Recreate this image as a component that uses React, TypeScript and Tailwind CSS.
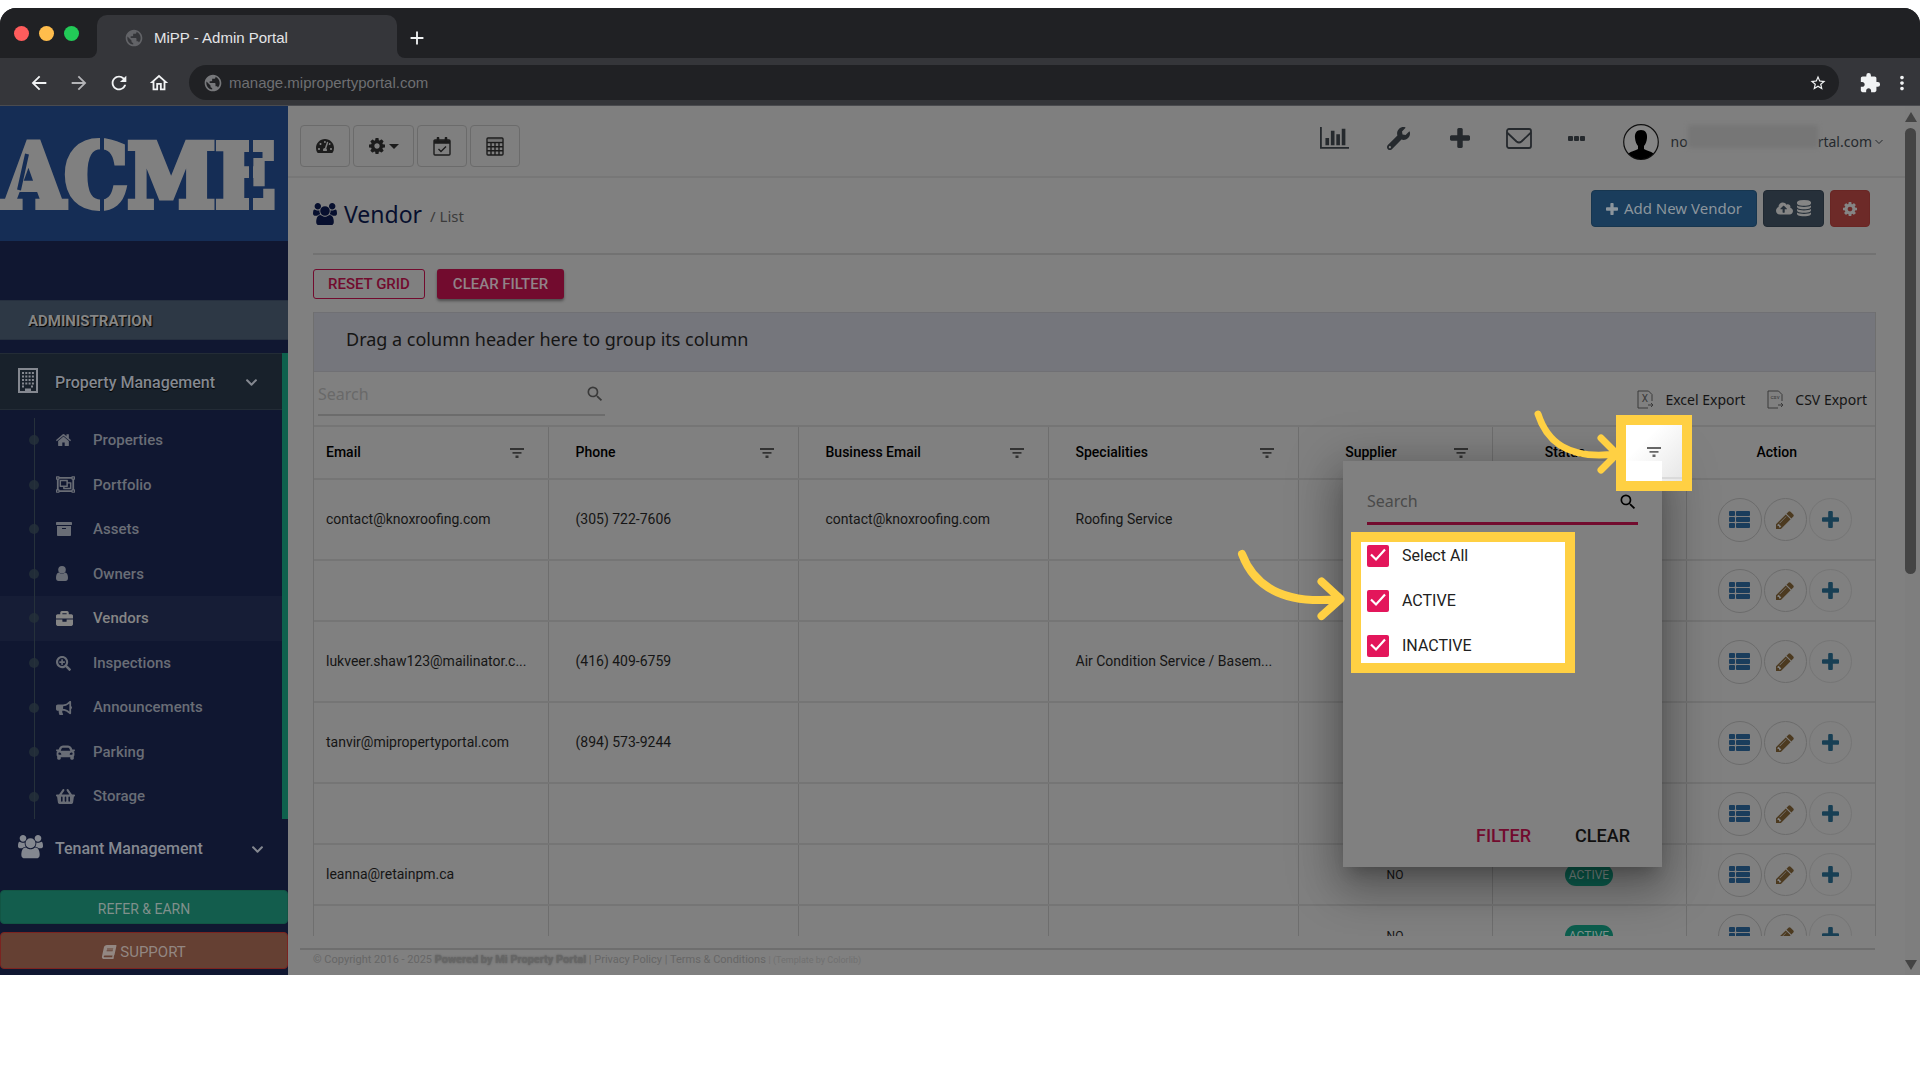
import React from "react";
import {
  FaArchive,
  FaBook,
  FaBriefcase,
  FaBullhorn,
  FaCar,
  FaChevronDown,
  FaCloudUploadAlt,
  FaRegObjectGroup,
  FaSearchPlus,
  FaShoppingBasket,
  FaTachometerAlt,
  FaWrench,
} from "react-icons/fa";
import {
  MdAdd,
  MdArrowBack,
  MdArrowForward,
  MdExtension,
  MdMoreVert,
  MdOutlineHome,
  MdPublic,
  MdRefresh,
  MdSearch,
  MdStarBorder,
} from "react-icons/md";

type IconProps = { className?: string };

const PlusIcon = ({ className }: IconProps) => (
  <svg viewBox="192 128 1408 1408" fill="currentColor" className={className}>
    <path d="M1600 736v192q0 40-28 68t-68 28h-416v416q0 40-28 68t-68 28h-192q-40 0-68-28t-28-68v-416h-416q-40 0-68-28t-28-68v-192q0-40 28-68t68-28h416v-416q0-40 28-68t68-28h192q40 0 68 28t28 68v416h416q40 0 68 28t28 68z" />
  </svg>
);

const CogIcon = ({ className }: IconProps) => (
  <svg viewBox="128 128 1536 1536" fill="currentColor" className={className}>
    <path d="M1152 896q0-106-75-181t-181-75-181 75-75 181 75 181 181 75 181-75 75-181zm512-109v222q0 12-8 23t-20 13l-185 28q-19 54-39 91 35 50 107 138 10 12 10 25t-9 23q-27 37-99 108t-94 71q-12 0-26-9l-138-108q-44 23-91 38-16 136-29 186-7 28-36 28h-222q-14 0-24.5-8.5t-11.5-21.5l-28-184q-49-16-90-37l-141 107q-10 9-25 9-14 0-25-11-126-114-165-168-7-10-7-23 0-12 8-23 15-21 51-66.5t54-70.5q-27-50-41-99l-183-27q-13-2-21-12.5t-8-23.5v-222q0-12 8-23t19-13l186-28q14-46 39-92-40-57-107-138-10-12-10-24 0-10 9-23 26-36 98.5-107.5t94.5-71.5q13 0 26 10l138 107q44-23 91-38 16-136 29-186 7-28 36-28h222q14 0 24.5 8.5t11.5 21.5l28 184q49 16 90 37l142-107q9-9 24-9 13 0 25 10 129 119 165 170 7 8 7 22 0 12-8 23-15 21-51 66.5t-54 70.5q26 50 41 98l183 28q13 2 21 12.5t8 23.5z" />
  </svg>
);

const UsersIcon = ({ className }: IconProps) => (
  <svg viewBox="0 0 1920 1792" fill="currentColor" className={className}>
    <path d="M593 896q-162 5-265 128h-134q-82 0-138-40.5t-56-118.5q0-353 124-353 6 0 43.5 21t97.5 42.5 119 21.5q67 0 133-23-5 37-5 66 0 139 81 256zm1071 637q0 120-73 189.5t-194 69.5h-874q-121 0-194-69.5t-73-189.5q0-53 3.5-103.5t14-109 26.5-108.5 43-97.5 62-81 85.5-53.5 111.5-20q10 0 43 21.5t73 48 107 48 135 21.5 135-21.5 107-48 73-48 43-21.5q61 0 111.5 20t85.5 53.5 62 81 43 97.5 26.5 108.5 14 109 3.5 103.5zm-1024-1277q0 106-75 181t-181 75-181-75-75-181 75-181 181-75 181 75 75 181zm704 384q0 159-112.5 271.5t-271.5 112.5-271.5-112.5-112.5-271.5 112.5-271.5 271.5-112.5 271.5 112.5 112.5 271.5zm576 225q0 78-56 118.5t-138 40.5h-134q-103-123-265-128 81-117 81-256 0-29-5-66 66 23 133 23 59 0 119-21.5t97.5-42.5 43.5-21q124 0 124 353zm-128-609q0 106-75 181t-181 75-181-75-75-181 75-181 181-75 181 75 75 181z" />
  </svg>
);

const UserIcon = ({ className }: IconProps) => (
  <svg viewBox="0 0 12 15" fill="currentColor" className={className}>
    <circle cx="6" cy="3.800" r="3.800" />
    <path d="M3 6.500C.8 6.800 0 9 0 12c0 2 1 3 2.500 3h7c1.500 0 2.500-1 2.500-3 0-3-.8-5.200-3-5.500-1.700 1.700-4.300 1.700-6 0z" />
  </svg>
);

const HomeIcon = ({ className }: IconProps) => (
  <svg viewBox="90 240 1612 1300" fill="currentColor" className={className}>
    <path d="M1472 992v480q0 26-19 45t-45 19h-384v-384h-256v384h-384q-26 0-45-19t-19-45v-480q0-1 .5-3t.5-3l575-474 575 474q1 2 1 6zm223-69l-62 74q-8 9-21 11h-3q-13 0-21-7l-692-577-692 577q-12 8-24 7-13-2-21-11l-62-74q-8-10-7-23.5t11-21.5l719-599q32-26 76-26t76 26l244 204v-195q0-14 9-23t23-9h192q14 0 23 9t9 23v408l219 182q10 8 11 21.5t-7 23.5z" />
  </svg>
);

const DatabaseIcon = ({ className }: IconProps) => (
  <svg viewBox="128 0 1536 1792" fill="currentColor" className={className}>
    <path d="M896 768q237 0 443-43t325-127v170q0 69-103 128t-280 93.5-385 34.5-385-34.5-280-93.5-103-128v-170q119 84 325 127t443 43zm0 768q237 0 443-43t325-127v170q0 69-103 128t-280 93.5-385 34.5-385-34.5-280-93.5-103-128v-170q119 84 325 127t443 43zm0-384q237 0 443-43t325-127v170q0 69-103 128t-280 93.5-385 34.5-385-34.5-280-93.5-103-128v-170q119 84 325 127t443 43zm0-1152q208 0 385 34.5t280 93.5 103 128v128q0 69-103 128t-280 93.5-385 34.5-385-34.5-280-93.5-103-128v-128q0-69 103-128t280-93.5 385-34.5z" />
  </svg>
);

const PencilIcon = ({ className }: IconProps) => (
  <svg viewBox="128 128 1536 1536" fill="currentColor" className={className}>
    <path d="M491 1536l91-91-235-235-91 91v107h128v128h107zm523-928q0-22-22-22-10 0-17 7l-542 542q-7 7-7 17 0 22 22 22 10 0 17-7l542-542q7-7 7-17zm-54-192l416 416-832 832h-416v-416zm683 96q0 53-37 90l-166 166-416-416 166-165q36-38 90-38 53 0 91 38l235 234q37 39 37 91z" />
  </svg>
);

const ChartIcon = ({ className }: IconProps) => (
  <svg viewBox="0 128 2048 1536" fill="currentColor" className={className}>
    <path d="M640 896v512h-256v-512h256zm384-512v1024h-256v-1024h256zm1024 1152v128h-2048v-1536h128v1408h1920zm-640-896v768h-256v-768h256zm384-384v1152h-256v-1152h256z" />
  </svg>
);

const ListIcon = ({ className }: IconProps) => (
  <svg viewBox="0 0 21 17" fill="currentColor" className={className}>
    {[0, 6, 12].map((y) => (
      <React.Fragment key={y}>
        <rect x="0" y={y} width="6" height="5" rx="1" />
        <rect x="7" y={y} width="14" height="5" rx="1" />
      </React.Fragment>
    ))}
  </svg>
);

const BuildingIcon = ({ className }: IconProps) => (
  <svg viewBox="0 0 20 25" fill="none" stroke="currentColor" className={className}>
    <rect x="1" y="1" width="18" height="23" strokeWidth="2" />
    <path d="M4 5h12M4 8.5h12M4 12h12M4 15.5h12M4 18.5h3M13 18.5h3" strokeWidth="2.2" strokeDasharray="2 1.3" />
    <path d="M7 20.5h6v4H7z" fill="currentColor" stroke="none" />
  </svg>
);

const CalendarIcon = ({ className }: IconProps) => (
  <svg viewBox="0 0 18 19" fill="none" stroke="currentColor" className={className}>
    <rect x="1" y="3" width="16" height="15" rx="1" strokeWidth="1.4" />
    <path d="M1 5h16" strokeWidth="3.500" />
    <path d="M5 1v4M13 1v4" strokeWidth="2.600" strokeLinecap="round" />
    <path d="M5.500 12l2.500 2.500 5-5" strokeWidth="1.400" />
  </svg>
);

const CalculatorIcon = ({ className }: IconProps) => (
  <svg viewBox="0 0 18 19" fill="none" stroke="currentColor" className={className}>
    <rect x="1" y="1" width="16" height="17" rx="1" strokeWidth="1.4" />
    <path d="M1 5.5h16M1 9.7h16M1 13.8h16M5 5.5V18M9 5.5V18M13 5.5V18" strokeWidth="1.4" />
    <path d="M2 2.8h14" strokeWidth="1" opacity=".3" />
  </svg>
);

const EnvelopeIcon = ({ className }: IconProps) => (
  <svg viewBox="0 0 26 21" fill="none" stroke="currentColor" strokeWidth="1.8" className={className}>
    <rect x="1" y="1" width="24" height="19" rx="2" />
    <path d="M1 4.5l9.5 9q2.5 2 5 0L25 4.5" />
  </svg>
);

const FilterIcon = ({ className }: IconProps) => (
  <svg viewBox="0 0 14 10" fill="currentColor" className={className}>
    <path d="M0 0h14v2H0zM2.500 4h9v1.800h-9zM5.500 7.500h3V10h-3z" />
  </svg>
);

const ExportIcon = ({ label, className }: IconProps & { label: string }) => (
  <svg viewBox="0 0 17 19" fill="none" stroke="currentColor" className={className}>
    <path d="M15 11V4.500L11.500 1H1v17h10M11 15h5M14 13l2 2-2 2" />
    <text
      x="8"
      y={label === "X" ? 12 : 9}
      fontSize={label === "X" ? 10 : 6}
      textAnchor="middle"
      fill="currentColor"
      stroke="none"
      fontFamily="Roboto, sans-serif"
    >
      {label}
    </text>
  </svg>
);

const AvatarIcon = ({ className }: IconProps) => (
  <svg viewBox="0 0 36 36" className={className}>
    <circle cx="18" cy="18" r="17.300" fill="#858585" stroke="#111" strokeWidth="1.200" />
    <path
      d="M18 6c-4.500 0-6.500 3.500-6 8 .3 3.500 1.500 6.500 3 8v3c-2 1.800-7 2-9.500 4.500A17 17 0 0 0 18 35.200a17 17 0 0 0 12.500-5.700C28 27 23 26.800 21 25v-3c1.500-1.500 2.700-4.500 3-8 .5-4.500-1.500-8-6-8z"
      fill="#000"
    />
  </svg>
);

const menu = [
  { label: "Properties", icon: <HomeIcon className="w-[15px]" /> },
  { label: "Portfolio", icon: <FaRegObjectGroup size={19} /> },
  { label: "Assets", icon: <FaArchive size={16} /> },
  { label: "Owners", icon: <UserIcon className="w-3" /> },
  { label: "Vendors", icon: <FaBriefcase size={17} />, active: true },
  { label: "Inspections", icon: <FaSearchPlus size={15} /> },
  { label: "Announcements", icon: <FaBullhorn size={16} /> },
  { label: "Parking", icon: <FaCar size={19} /> },
  { label: "Storage", icon: <FaShoppingBasket size={19} /> },
];

type Vendor = {
  email?: string;
  phone?: string;
  business?: string;
  speciality?: string;
  tall?: boolean;
};

const vendors: Vendor[] = [
  {
    email: "contact@knoxroofing.com",
    phone: "(305) 722-7606",
    business: "contact@knoxroofing.com",
    speciality: "Roofing Service",
    tall: true,
  },
  {},
  {
    email: "lukveer.shaw123@mailinator.c...",
    phone: "(416) 409-6759",
    speciality: "Air Condition Service / Basem...",
    tall: true,
  },
  { email: "tanvir@mipropertyportal.com", phone: "(894) 573-9244", tall: true },
  {},
  { email: "leanna@retainpm.ca" },
  {},
];

const BrowserBar = () => (
  <header className="bg-[#35363a] [font-family:'Liberation_Sans',Arial,sans-serif]">
    <div className="flex h-[50px]">
      <div className="flex w-[97px] items-center gap-[10px] rounded-br-[8px] bg-[#202124] pl-[14px]">
        <span className="size-[15px] rounded-full bg-[#ff5c5c]" />
        <span className="size-[15px] rounded-full bg-[#ffbd4c]" />
        <span className="size-[15px] rounded-full bg-[#22ca57]" />
      </div>
      <div className="flex w-[300px] items-end bg-[linear-gradient(#202124_50%,#35363a_50%)]">
        <div className="flex h-[43px] w-full items-center gap-[10px] rounded-t-[10px] bg-[#35363a] pt-[3px] pl-[27px] text-[15px] text-[#e4e5e7]">
          <MdPublic size={20} className="text-[#626367]" />
          MiPP - Admin Portal
        </div>
      </div>
      <div className="flex flex-1 items-end rounded-bl-[8px] bg-[#202124]">
        <button aria-label="New tab" className="flex h-[43px] w-10 items-center justify-center pt-[3px] text-[#f1f3f4]">
          <MdAdd size={22} />
        </button>
      </div>
    </div>
    <div className="flex h-12 items-center border-b border-[#4a4b4f] bg-[#35363a] pt-[2px] text-[#f1f3f4]">
      <div className="flex w-[189px] items-center gap-[18px] pl-7">
        <MdArrowBack size={22} />
        <MdArrowForward size={22} className="text-[#b4b5b8]" />
        <MdRefresh size={22} />
        <MdOutlineHome size={22} />
      </div>
      <div className="flex h-[35px] flex-1 items-center rounded-full bg-[#202124] pr-3 pl-[14px]">
        <MdPublic size={20} className="text-[#77787b]" />
        <input
          aria-label="Address"
          defaultValue="manage.mipropertyportal.com"
          className="ml-[6px] flex-1 bg-transparent pt-[2px] text-[15px] text-[#6e6f72] outline-none"
        />
        <MdStarBorder size={18} />
      </div>
      <div className="flex w-[81px] items-center gap-[10px] pl-5">
        <MdExtension size={22} />
        <MdMoreVert size={22} />
      </div>
    </div>
  </header>
);

const Sidebar = () => (
  <aside className="flex w-[288px] shrink-0 flex-col bg-[#101731] [font-family:Roboto,sans-serif] font-medium text-[#848890]">
    <a
      href="#"
      className="relative flex h-[135px] items-center bg-[#152d55] pt-1 pl-[3px] [font-family:'DejaVu_Serif_Condensed','DejaVu_Serif',serif] text-[88px] leading-none font-bold text-[#808080] [-webkit-text-stroke:6px_#808080]"
    >
      ACME
      {/* stencil breaks in the logo lettering */}
      <svg viewBox="0 0 288 135" fill="none" stroke="#152d55" strokeWidth="4" className="absolute inset-0 size-full">
        <path d="M27 48L19 84M102 26v84M251 28v82" />
      </svg>
    </a>
    <div className="mt-[59px] flex h-10 items-center border-y border-[#26303f] bg-[#2d3845] pt-[2px] pl-7 text-[15px] font-bold text-[#858585] [text-shadow:1px_1px_1px_#000]">
      ADMINISTRATION
    </div>
    <nav className="mt-[13px]">
      <div className="border-r-[6px] border-[#0e614d]">
        <button className="flex h-[57px] w-full items-center border-y border-[#232c36] bg-[#18212b] pt-[2px] pl-[18px] text-[16px] [text-shadow:0_1px_1px_#000]">
          <BuildingIcon className="mb-1 h-[25px] w-5" />
          <span className="ml-[17px] flex-1 text-left">Property Management</span>
          <FaChevronDown size={13} className="mr-6" />
        </button>
        <ul className="relative mt-2 grid h-[401px] grid-rows-9 before:absolute before:inset-y-0 before:left-[34px] before:w-px before:bg-[#26313b]">
          {menu.map(({ label, icon, active }) => (
            <li key={label}>
              <a
                href="#"
                className={
                  active
                    ? "flex h-full items-center bg-[#161d36] pl-[29px] text-[15px] text-[#858585]"
                    : "flex h-full items-center pl-[29px] text-[15px] text-[#696d76]"
                }
              >
                <span className="size-[10px] rounded-full bg-[#212c38]" />
                <span className="ml-[17px] w-[37px]">{icon}</span>
                {label}
              </a>
            </li>
          ))}
        </ul>
      </div>
      <button className="flex h-[58px] w-full items-center pt-[2px] pl-[18px] text-[16px]">
        <UsersIcon className="mb-1 w-[25px]" />
        <span className="ml-3 flex-1 text-left">Tenant Management</span>
        <FaChevronDown size={13} className="mr-6" />
      </button>
    </nav>
    <button className="mt-[13px] h-[34px] rounded-[4px] border border-[#125544] bg-[#135d4d] pt-1 text-[14px] font-normal text-[#80908c]">
      REFER &amp; EARN
    </button>
    <button className="mt-2 flex h-[37px] items-center justify-center gap-1 rounded-[4px] border border-[#7b2320] bg-[#654033] pt-[3px] text-[15px] font-normal text-[#938782]">
      <FaBook size={14} className="-skew-x-12" />
      SUPPORT
    </button>
  </aside>
);

const toolButton =
  "flex h-[42px] items-center justify-center rounded-[4px] border border-[#6b6b6b] text-[#1c1c1c]";

const TopNav = () => (
  <div className="flex h-[72px] justify-between border-b-2 border-[#777] bg-[#7f7f7f] pr-[22px] pl-3 text-[#25292d]">
    <div className="mt-[19px] flex gap-[3px]">
      <button aria-label="Dashboard" className={`${toolButton} w-[50px]`}>
        <FaTachometerAlt size={18} />
      </button>
      <button aria-label="Settings" className={`${toolButton} w-[61px] gap-1`}>
        <CogIcon className="size-4" />
        <span className="border-x-[5px] border-t-[5px] border-x-transparent border-t-current" />
      </button>
      <button aria-label="Calendar" className={`${toolButton} w-[50px]`}>
        <CalendarIcon className="h-[19px] w-[18px]" />
      </button>
      <button aria-label="Calculator" className={`${toolButton} w-[50px]`}>
        <CalculatorIcon className="h-[19px] w-[18px]" />
      </button>
    </div>
    <div className="flex h-16 items-center">
      <ChartIcon className="mr-[38px] w-[29px]" />
      <FaWrench size={23} className="mr-10" />
      <PlusIcon className="mr-9 w-5" />
      <EnvelopeIcon className="mr-9 w-[26px]" />
      <span className="mr-[38px] flex gap-px">
        <i className="size-[5px] rounded-[1px] bg-current" />
        <i className="size-[5px] rounded-[1px] bg-current" />
        <i className="size-[5px] rounded-[1px] bg-current" />
      </span>
      <button className="mt-[7px] flex items-center text-[14px]">
        <AvatarIcon className="mr-3 size-9" />
        no
        <span className="mb-[10px] h-[23px] w-[130px] bg-[#767676] blur-[2px]" />
        rtal.com
        <svg viewBox="0 0 8 6" fill="none" stroke="currentColor" className="ml-[3px] w-2">
          <path d="M.5 1L4 4.500 7.500 1" />
        </svg>
      </button>
    </div>
  </div>
);

const columns = ["Email", "Phone", "Business Email", "Specialities"];

const VendorTable = () => (
  <div className="h-[511px] overflow-hidden">
    <table className="w-full table-fixed border-collapse text-[14px] text-[#151515]">
      <colgroup>
        <col />
        <col className="w-[250px]" />
        <col className="w-[250px]" />
        <col className="w-[250px]" />
        <col className="w-[194px]" />
        <col className="w-[194px]" />
        <col className="w-[189px]" />
      </colgroup>
      <thead>
        <tr className="h-[53px] border-y-2 border-[#757575] text-black">
          {columns.map((name) => (
            <th key={name} className="border-r border-[#6e6e6e] pr-6 pl-[27px] text-left font-medium first:pl-3">
              <div className="flex items-center justify-between">
                {name}
                <FilterIcon className="w-[14px] text-[#333]" />
              </div>
            </th>
          ))}
          <th className="border-r border-[#6e6e6e] pr-6 font-medium">
            <div className="flex items-center">
              <span className="flex-1 pr-[10px]">Supplier</span>
              <FilterIcon className="w-[14px] text-[#333]" />
            </div>
          </th>
          <th className="border-r border-[#6e6e6e] pr-12 font-medium">Status</th>
          <th className="pr-2 font-medium">Action</th>
        </tr>
      </thead>
      <tbody>
        {vendors.map(({ email, phone, business, speciality, tall }, index) => (
          <tr key={index} className={tall ? "h-[81px] border-b-2 border-[#757575]" : "h-[61px] border-b-2 border-[#757575]"}>
            <td className="border-r border-[#6e6e6e] pl-3 whitespace-nowrap">{email}</td>
            <td className="border-r border-[#6e6e6e] pl-[27px]">{phone}</td>
            <td className="border-r border-[#6e6e6e] pl-[27px]">{business}</td>
            <td className="border-r border-[#6e6e6e] pl-[27px] whitespace-nowrap">{speciality}</td>
            <td className="border-r border-[#6e6e6e] text-center text-[12px]">NO</td>
            <td className="border-r border-[#6e6e6e] text-center">
              <span className="inline-flex h-[22px] items-center rounded-full bg-[#0d5e4e] px-1 text-[12px] text-[#80918d]">
                ACTIVE
              </span>
            </td>
            <td>
              <div className="flex items-center justify-center gap-[2px] pl-2">
                <button aria-label="Details" className="flex size-11 items-center justify-center rounded-full border border-[#6c6c6c] text-[#1a3d5c]">
                  <ListIcon className="w-[21px]" />
                </button>
                <button aria-label="Edit" className="flex size-[43px] items-center justify-center rounded-full border border-[#6c6c6c] text-[#4c3a20]">
                  <PencilIcon className="size-[18px]" />
                </button>
                <button aria-label="Add" className="flex size-[43px] items-center justify-center rounded-full border border-[#757575] text-[#183f54]">
                  <PlusIcon className="size-[17px]" />
                </button>
              </div>
            </td>
          </tr>
        ))}
      </tbody>
    </table>
  </div>
);

const FilterPopup = () => (
  <div className="absolute top-[149px] right-[214px] flex h-[406px] w-[319px] flex-col bg-[#808080] shadow-[0_11px_15px_-7px_rgba(0,0,0,0.2),0_24px_38px_3px_rgba(0,0,0,0.14),0_9px_46px_8px_rgba(0,0,0,0.25)]">
    <div className="mx-6 mt-[18px] flex h-[46px] items-center border-b-[3px] border-[#720b2e]">
      <input
        aria-label="Search values"
        placeholder="Search"
        className="w-full flex-1 bg-transparent pt-px [font-family:'Noto_Sans',sans-serif] text-[16px] outline-none placeholder:text-[#4a4a4a]"
      />
      <MdSearch size={20} className="mt-[2px] text-black" />
    </div>
    <div className="mt-[7px] ml-2 flex w-[224px] flex-col gap-[23px] border-[10px] border-[#ffd043] bg-white pt-[3px] pb-[6px] pl-[6px]">
      {["Select All", "ACTIVE", "INACTIVE"].map((option) => (
        <label key={option} className="relative flex h-[22px] items-center gap-[13px] text-[16px] text-[#212121]">
          <input type="checkbox" defaultChecked className="size-[22px] appearance-none rounded-[2px] bg-[#e3165b]" />
          <svg viewBox="0 0 22 22" fill="none" stroke="#fff" strokeWidth="2.200" className="pointer-events-none absolute left-0 size-[22px]">
            <path d="M4 9.500l5 5 9-10" />
          </svg>
          {option}
        </label>
      ))}
    </div>
    <div className="mt-auto flex h-16 items-center justify-end gap-11 pr-8 text-[18px] font-medium">
      <button className="text-[#720b2e]">FILTER</button>
      <button className="text-[#101010]">CLEAR</button>
    </div>
  </div>
);

const Callouts = () => (
  <>
    <button
      aria-label="Filter by status"
      className="absolute top-[103px] right-[184px] size-[76px] border-[10px] border-[#ffd043] bg-linear-to-br from-white from-30% to-[#e6e6e6]"
    >
      <span className="absolute bottom-[2px] left-0 h-[2px] w-full bg-[#dadada]" />
      <span className="absolute bottom-0 left-0 h-5 w-9 bg-white" />
      <FilterIcon className="absolute top-[22px] left-[21px] w-[14px] text-[#666]" />
    </button>
    <svg
      viewBox="1530 405 96 76"
      fill="none"
      stroke="#ffd043"
      strokeWidth="7"
      strokeLinecap="round"
      strokeLinejoin="round"
      className="absolute top-[93px] right-[250px] h-[76px] w-24"
    >
      <path d="M1538 414C1547 442 1568 460 1616 454M1601 438L1617 454L1601 470" />
    </svg>
    <svg
      viewBox="1235 545 115 82"
      fill="none"
      stroke="#ffd043"
      strokeWidth="8"
      strokeLinecap="round"
      strokeLinejoin="round"
      className="absolute top-[233px] right-[526px] h-[82px] w-[115px]"
    >
      <path d="M1242 554C1254 586 1283 605 1340 599M1321.500 581.500L1340.500 599L1321.500 616" />
    </svg>
  </>
);

const Main = () => (
  <main className="min-w-0 flex-1">
    <TopNav />
    <div className="pr-[29px] pl-[25px] [font-family:'Noto_Sans',sans-serif]">
      <div className="flex h-[77px] justify-between border-b-2 border-[#727272] pt-3 pr-[6px]">
        <h1 className="flex h-12 items-center text-[23px] text-[#070f2e]">
          <UsersIcon className="mr-[7px] w-6" />
          Vendor
          <small className="mt-1 ml-2 text-[15px] text-[#3b3b3b]">/ List</small>
        </h1>
        <div className="flex gap-[6px]">
          <button className="flex h-[37px] items-center gap-[6px] rounded-[4px] border border-[#17364f] bg-[#1a3d5c] px-[14px] text-[15px] text-[#8c959c]">
            <PlusIcon className="w-3" />
            Add New Vendor
          </button>
          <button aria-label="Upload data" className="flex h-[37px] w-[61px] items-center justify-center gap-1 rounded-[4px] border border-[#202932] bg-[#26303a] text-[#858585]">
            <FaCloudUploadAlt size={17} />
            <DatabaseIcon className="w-[14px]" />
          </button>
          <button aria-label="Grid settings" className="flex h-[37px] w-10 items-center justify-center rounded-[4px] border border-[#692624] bg-[#6d2a28] text-[#858585]">
            <CogIcon className="w-[14px]" />
          </button>
        </div>
      </div>

      <div className="mt-[14px] mb-[13px] flex gap-3 [font-family:Roboto,sans-serif] text-[15px] font-medium">
        <button className="h-[30px] rounded-[3px] border border-[#720b2e] px-[14px] text-[#720b2e]">RESET GRID</button>
        <button className="h-[30px] rounded-[3px] bg-[#720b2e] px-4 text-[#918389] shadow-[0_2px_3px_rgba(0,0,0,0.4)]">
          CLEAR FILTER
        </button>
      </div>

      <section className="relative [font-family:Roboto,sans-serif]">
        <div className="border-x border-[#6f6f6f]">
          <div className="flex h-[60px] items-center border-y border-[#707074] bg-[#75767c] pb-[6px] pl-8 [font-family:'Noto_Sans',sans-serif] text-[18px] text-[#151515]">
            Drag a column header here to group its column
          </div>
          <div className="flex h-[53px] items-start justify-between pr-2 pl-1">
            <div className="flex h-[44px] w-[287px] items-center border-b-2 border-[#6c6c6c] pt-[2px]">
              <input
                aria-label="Search"
                placeholder="Search"
                className="w-full flex-1 bg-transparent [font-family:'Noto_Sans',sans-serif] text-[16px] outline-none placeholder:text-[#696969]"
              />
              <MdSearch size={20} className="text-[#3a3a3a]" />
            </div>
            <div className="flex h-[53px] items-center gap-[22px] pt-[2px] [font-family:'Noto_Sans',sans-serif] text-[14px] text-[#151515]">
              <button className="flex items-center gap-[11px]">
                <ExportIcon label="X" className="h-[19px] text-[#3a3a3a]" />
                Excel Export
              </button>
              <button className="flex items-center gap-[11px]">
                <ExportIcon label="csv" className="h-[19px] text-[#3a3a3a]" />
                CSV Export
              </button>
            </div>
          </div>
          <VendorTable />
        </div>
        <FilterPopup />
        <Callouts />
      </section>
    </div>

    <footer className="mt-3 mr-[30px] ml-3 h-[27px] border-t-2 border-[#6e6e6e] pl-[13px] [font-family:Roboto,sans-serif] text-[11px] leading-[20px] text-[#666]">
      © Copyright 2016 - 2025 <b className="[text-shadow:0_0_2px_#555]">Powered by Mi Property Portal</b> |{" "}
      <a href="#">Privacy Policy</a> | <a href="#">Terms &amp; Conditions</a>{" "}
      <span className="text-[9px] text-[#707070]">
        | (Template by <a href="#">Colorlib</a>)
      </span>
    </footer>
  </main>
);

const Scrollbar = () => (
  <div className="flex w-[15px] shrink-0 flex-col items-center bg-[#7e7e7e] pt-[6px] pr-1 pb-[5px]">
    <span className="border-x-[6px] border-b-[10px] border-x-transparent border-b-[#444]" />
    <span className="mt-[6px] h-[446px] w-[11px] rounded-full bg-[#444]" />
    <span className="mt-auto border-x-[6px] border-t-[10px] border-x-transparent border-t-[#444]" />
  </div>
);

export default function App() {
  return (
    <div className="min-h-screen bg-white pt-2">
      <div className="overflow-hidden rounded-t-2xl">
        <BrowserBar />
        <div className="flex bg-[#808080]">
          <Sidebar />
          <Main />
          <Scrollbar />
        </div>
      </div>
    </div>
  );
}
